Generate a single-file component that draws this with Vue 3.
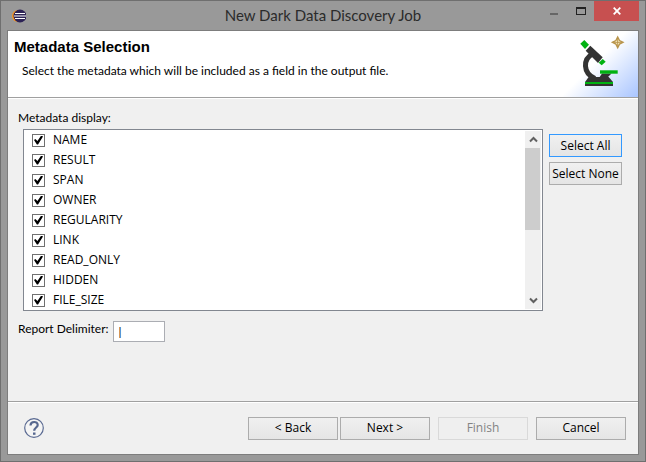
<template>
  <div class="window">
    <header class="title-bar">
      <svg class="app-icon" width="14" height="14" viewBox="0 0 14 14">
        <circle cx="6" cy="7" r="6" fill="#f7941e" />
        <circle cx="8" cy="7" r="6.500" fill="#2c2255" />
        <path d="M3 4.500h10M2 7h12M3 9.500h10" stroke="#fff" stroke-width="1.200" />
      </svg>
      <div class="window-title">New Dark Data Discovery Job</div>
      <div class="caption-buttons">
        <button class="caption" aria-label="Minimize">
          <svg width="12" height="10" viewBox="0 0 12 10"><path d="M2 7h8v2H2z" fill="#666" /></svg>
        </button>
        <button class="caption" aria-label="Maximize">
          <svg width="12" height="10" viewBox="0 0 12 10">
            <path fill-rule="evenodd" d="M1 1h10v8H1zM2 3v5h8V3z" fill="#222" />
          </svg>
        </button>
        <button class="caption close" aria-label="Close">
          <svg width="8" height="8" viewBox="0 0 8 8">
            <path d="M.7.7l6.600 6.600M7.300.7L.7 7.300" stroke="#fff" stroke-width="1.800" />
          </svg>
        </button>
      </div>
    </header>

    <main class="dialog">
      <section class="banner">
        <div class="banner-text">
          <h1>Metadata Selection</h1>
          <p>Select the metadata which will be included as a field in the output file.</p>
        </div>
        <div class="banner-art">
          <svg width="75" height="66" viewBox="0 0 75 66">
            <!-- microscope -->
            <path d="M29.500 23C20 28 19.500 42 32 47.500" fill="none" stroke="#333" stroke-width="5" />
            <path d="M22.700 19.700L27.300 14.700 39.700 26.300 35 32z" fill="#333" />
            <path d="M25.700 46h20l4.300 5v4H22v-4z" fill="#333" />
            <path d="M39 42.500h9.500L44 47h-8z" fill="#333" />
            <path d="M22 51h28v2H22z" fill="#00b212" />
            <path d="M37 39.300h17.700v3.400H37z" fill="#00b212" />
            <path d="M17.300 12.800L21.300 9 26 13.700 22 18z" fill="#00b212" />
            <path d="M35.700 31.700L39.700 28 42.700 30.700 38.700 34.300z" fill="#00b212" />
            <!-- sparkle -->
            <path d="M54.700 6l1.800 3.500 3.500 1.800-3.500 1.800-1.800 3.500-1.800-3.500-3.500-1.800 3.500-1.800z" fill="#fff6d0" stroke="#b8944c" stroke-width="1.400" />
            <path d="M54.700 7v9M50 11.300h9" stroke="#b8944c" stroke-width="1" />
          </svg>
        </div>
      </section>

      <section class="content">
        <div id="list-label">Metadata display:</div>
        <div class="list-row">
          <div class="list" role="group" aria-labelledby="list-label">
            <div class="items">
              <label v-for="item in items" :key="item.name" class="item">
                <input v-model="item.checked" type="checkbox" />
                <span>{{ item.name }}</span>
              </label>
            </div>
            <div class="scrollbar">
              <button class="arrow" aria-label="Scroll up">
                <svg width="9" height="7" viewBox="0 0 9 7"><path d="M1 5.500L4.500 2 8 5.500" /></svg>
              </button>
              <div class="thumb"></div>
              <button class="arrow down" aria-label="Scroll down">
                <svg width="9" height="7" viewBox="0 0 9 7"><path d="M1 1.500L4.500 5 8 1.500" /></svg>
              </button>
            </div>
          </div>
          <div class="side-buttons">
            <button class="btn focused" @click="setAll(true)">Select All</button>
            <button class="btn" @click="setAll(false)">Select None</button>
          </div>
        </div>
        <div class="delimiter-row">
          <label for="delimiter">Report Delimiter:</label>
          <input id="delimiter" v-model="delimiter" type="text" />
        </div>
      </section>

      <footer class="footer">
        <button class="help" aria-label="Help">
          <svg width="20" height="20" viewBox="0 0 20 20">
            <circle cx="10" cy="10" r="9.300" fill="#f4f4f4" stroke="#5a6a92" stroke-width="1.200" />
            <path d="M6.500 7.500C6.500 2.800 13.700 3 13.700 7c0 2.500-3.500 2.600-3.500 5.800" fill="none" stroke="#56678f" stroke-width="2.200" />
            <path d="M9 14.500h2.500v2.300H9z" fill="#56678f" />
          </svg>
        </button>
        <div class="nav">
          <button class="btn">&lt; Back</button>
          <button class="btn">Next &gt;</button>
        </div>
        <button class="btn" disabled>Finish</button>
        <button class="btn">Cancel</button>
      </footer>
    </main>
  </div>
</template>

<script setup>
import { ref } from "vue"

const names = [
  'NAME', 'RESULT', 'SPAN', 'OWNER', 'REGULARITY',
  'LINK', 'READ_ONLY', 'HIDDEN', 'FILE_SIZE'
]

const items = ref(names.map((name) => ({ name, checked: true })))
const delimiter = ref('|')

const setAll = (checked) => {
  items.value.forEach((item) => {
    item.checked = checked
  })
}
</script>

<style>
body {
  margin: 0;
}
</style>

<style scoped>
* {
  box-sizing: border-box;
}

.window {
  display: flex;
  flex-direction: column;
  min-height: 100vh;
  padding: 0 6px 6px;
  border: 1px solid #6f6f6f;
  background: #999;
  color: #000;
  font-family: Lato, "Open Sans", sans-serif;
  font-size: 12px;
  line-height: 16px;
}

button,
input {
  margin: 0;
  padding: 0;
  font: inherit;
  color: inherit;
}

.title-bar {
  display: grid;
  grid-template-columns: 1fr auto 1fr;
  height: 29px;
}

.app-icon {
  margin: 8px 0 0 5px;
}

.window-title {
  padding-top: 4px;
  color: #2b2b2b;
  font-size: 15px;
  line-height: 20px;
}

.caption-buttons {
  display: flex;
  justify-content: flex-end;
  align-items: flex-start;
}

.caption {
  display: flex;
  align-items: center;
  justify-content: center;
  width: 27px;
  height: 20px;
  border: none;
  background: none;
}

.close {
  width: 45px;
  background: #c75050;
}

.dialog {
  flex: 1;
  display: flex;
  flex-direction: column;
  border: 1px solid #7d7d7d;
  background: #f0f0f0;
}

.banner {
  display: flex;
  justify-content: space-between;
  height: 67px;
  border-bottom: 1px solid #a0a0a0;
  background: #fff;
}

.banner-text {
  padding: 8px 0 0 6px;
}

h1 {
  margin: 0;
  font-family: "Liberation Sans", Arial, sans-serif;
  font-size: 15px;
  line-height: 16px;
}

p {
  margin: 8px 0 0 8px;
}

.banner-art {
  flex: none;
  height: 66px;
  background: linear-gradient(135deg, #fff 45%, #a9c5ff);
}

.banner-art svg {
  display: block;
}

.content {
  flex: 1;
  padding: 11px 16px 0 10px;
  border-top: 1px solid #fff;
}

.list-row {
  display: flex;
  gap: 6px;
  margin: 3px 0 0 5px;
}

.list {
  flex: 1;
  display: flex;
  border: 1px solid #828790;
  background: #fff;
  font-family: "Open Sans", "Noto Sans", sans-serif;
}

.items {
  flex: 1;
  padding-left: 8px;
}

.item {
  display: flex;
  align-items: center;
  gap: 8px;
  height: 20px;
}

.item input {
  appearance: none;
  display: grid;
  place-items: center;
  width: 13px;
  height: 13px;
  border: 1px solid #707070;
  background: #fff;
}

.item input:checked::before {
  content: "";
  width: 9px;
  height: 9px;
  background: #000;
  clip-path: polygon(0 50%, 15% 38%, 38% 60%, 80% 0, 100% 12%, 45% 100%, 32% 100%);
}

.scrollbar {
  display: flex;
  flex-direction: column;
  width: 16px;
  margin: 1px;
  background: #f0f0f0;
}

.arrow {
  display: flex;
  align-items: center;
  justify-content: center;
  height: 17px;
  border: none;
  background: none;
}

.arrow path {
  fill: none;
  stroke: #606060;
  stroke-width: 2;
}

.down {
  margin-top: auto;
}

.thumb {
  height: 82px;
  margin-right: 1px;
  background: #cdcdcd;
}

.side-buttons {
  display: flex;
  flex-direction: column;
  gap: 5px;
  width: 73px;
  padding-top: 5px;
}

.btn {
  width: 90px;
  height: 23px;
  border: 1px solid #acacac;
  background: linear-gradient(#f0f0f0, #e5e5e5);
  font-family: "Open Sans", "Noto Sans", sans-serif;
  white-space: nowrap;
}

.side-buttons .btn {
  width: 100%;
}

.btn.focused {
  border-color: #3399ff;
}

.btn:disabled {
  border-color: #d9d9d9;
  background: #efefef;
  color: #838383;
}

.delimiter-row {
  display: flex;
  gap: 4px;
  margin-top: 10px;
}

.delimiter-row input {
  width: 52px;
  height: 21px;
  padding: 0 5px;
  border: 1px solid #abadb3;
  background: #fff;
}

.footer {
  display: flex;
  align-items: center;
  gap: 8px;
  height: 53px;
  padding: 0 12px 0 16px;
  border-top: 1px solid #a0a0a0;
  box-shadow: inset 0 1px #fff;
}

.help {
  margin-right: auto;
  border: none;
  background: none;
}

.help svg {
  display: block;
}

.nav {
  display: flex;
  gap: 2px;
}
</style>
